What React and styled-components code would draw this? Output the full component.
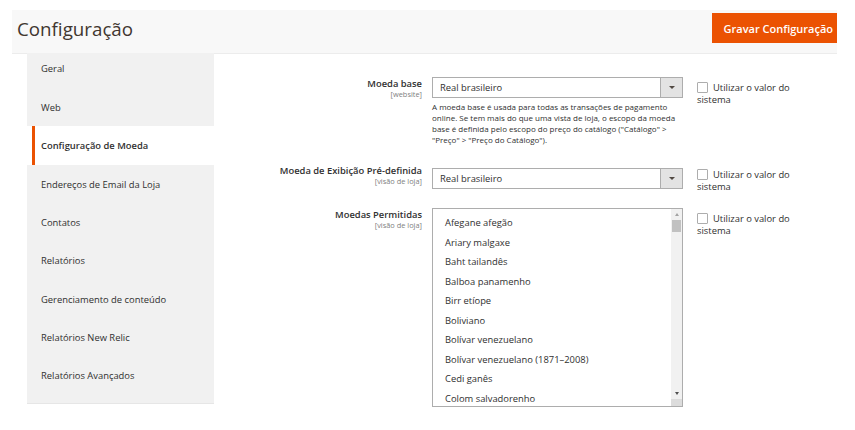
import React from "react";
import styled, { createGlobalStyle } from "styled-components";

const GlobalStyle = createGlobalStyle`
  html, body {
    margin: 0;
    padding: 0;
    background: #ffffff;
  }
  body {
    font-family: "Open Sans", "Liberation Sans", sans-serif;
    color: #303030;
  }
  * {
    box-sizing: border-box;
  }
`;

const navItems = [
  "Geral",
  "Web",
  "Configuração de Moeda",
  "Endereços de Email da Loja",
  "Contatos",
  "Relatórios",
  "Gerenciamento de conteúdo",
  "Relatórios New Relic",
  "Relatórios Avançados",
];

const currencies = [
  "Afegane afegão",
  "Ariary malgaxe",
  "Baht tailandês",
  "Balboa panamenho",
  "Birr etíope",
  "Boliviano",
  "Bolívar venezuelano",
  "Bolívar venezuelano (1871–2008)",
  "Cedi ganês",
  "Colom salvadorenho",
];

const App = () => {
  return (
    <Page>
      <GlobalStyle />
      <Header>
        <Title>Configuração</Title>
        <SaveButton>Gravar Configuração</SaveButton>
      </Header>
      <Body>
        <Nav>
          {navItems.map((item, i) => (
            <NavItem key={item} $active={i === 2}>
              {item}
            </NavItem>
          ))}
        </Nav>
        <Main>
          <Row $spacing={19}>
            <FieldLabel>
              <LabelText>Moeda base</LabelText>
              <Scope>[website]</Scope>
            </FieldLabel>
            <Control>
              <Select>
                <SelectValue>Real brasileiro</SelectValue>
                <SelectArrow>
                  <Caret />
                </SelectArrow>
              </Select>
              <Note>
                A moeda base é usada para todas as transações de pagamento
                <br />
                online. Se tem mais do que uma vista de loja, o escopo da moeda
                <br />
                base é definida pelo escopo do preço do catálogo ("Catálogo" &gt;
                <br />
                "Preço" &gt; "Preço do Catálogo").
              </Note>
            </Control>
            <UseDefault>
              <Checkbox />
              Utilizar o valor do sistema
            </UseDefault>
          </Row>

          <Row $spacing={15}>
            <FieldLabel>
              <LabelText>Moeda de Exibição Pré-definida</LabelText>
              <Scope>[visão de loja]</Scope>
            </FieldLabel>
            <Control $offset={4}>
              <Select>
                <SelectValue>Real brasileiro</SelectValue>
                <SelectArrow>
                  <Caret />
                </SelectArrow>
              </Select>
            </Control>
            <UseDefault>
              <Checkbox />
              Utilizar o valor do sistema
            </UseDefault>
          </Row>

          <Row>
            <FieldLabel>
              <LabelText>Moedas Permitidas</LabelText>
              <Scope>[visão de loja]</Scope>
            </FieldLabel>
            <Control>
              <MultiSelect>
                <OptionList>
                  {currencies.map((c) => (
                    <Option key={c}>{c}</Option>
                  ))}
                </OptionList>
                <Scrollbar>
                  <ScrollButton>
                    <ScrollCaret $up />
                  </ScrollButton>
                  <Thumb />
                  <Track />
                  <ScrollButton>
                    <ScrollCaret />
                  </ScrollButton>
                  <Resizer />
                </Scrollbar>
              </MultiSelect>
            </Control>
            <UseDefault>
              <Checkbox />
              Utilizar o valor do sistema
            </UseDefault>
          </Row>
        </Main>
      </Body>
    </Page>
  );
};

const Page = styled.div`
  width: 837px;
  padding: 10px 0 0 12px;
`;

const Header = styled.header`
  height: 43px;
  display: flex;
  justify-content: space-between;
  align-items: flex-start;
  padding-left: 5px;
  background: #f8f8f8;
  box-shadow: 0 1px 0 #ececec;
`;

const Title = styled.h1`
  margin: 6px 0 0;
  font-size: 18.75px;
  font-weight: 400;
  line-height: 25.5px;
  color: #41362f;
`;

const SaveButton = styled.button`
  margin-top: 3px;
  height: 30px;
  padding: 0 4px 0 12px;
  border: none;
  background: #eb5202;
  color: #ffffff;
  font-family: inherit;
  font-size: 11px;
  font-weight: 600;
  text-align: left;
  cursor: pointer;
`;

const Body = styled.div`
  display: flex;
  align-items: flex-start;
`;

const Nav = styled.nav`
  margin-left: 15px;
  width: 187px;
  padding-bottom: 8px;
  background: #f1f1f1;
  border-bottom: 1px solid #e6e6e6;
`;

const NavItem = styled.div`
  position: relative;
  height: 38.35px;
  display: flex;
  align-items: center;
  padding-left: 14px;
  font-size: 9.4px;
  font-weight: ${(p) => (p.$active ? 600 : 400)};
  color: #303030;
  background: ${(p) => (p.$active ? "#ffffff" : "transparent")};

  &:first-child {
    height: 35.15px;
    padding-bottom: 3.2px;
  }

  &::before {
    content: "";
    display: ${(p) => (p.$active ? "block" : "none")};
    position: absolute;
    left: 5px;
    top: 0;
    bottom: 0;
    width: 3px;
    background: #eb5202;
  }
`;

const Main = styled.main`
  flex: 1;
  padding-top: 24px;
  display: flex;
  flex-direction: column;
`;

const Row = styled.div`
  display: grid;
  grid-template-columns: 208px 251px 120px;
  column-gap: 10px;
  align-items: start;
  margin-bottom: ${(p) => p.$spacing || 0}px;
`;

const FieldLabel = styled.div`
  padding-top: 1px;
  text-align: right;
`;

const LabelText = styled.span`
  display: block;
  font-size: 9.4px;
  font-weight: 600;
  line-height: 12px;
  color: #303030;
`;

const Scope = styled.span`
  display: block;
  font-size: 7.4px;
  line-height: 9px;
  color: #808080;
`;

const Control = styled.div`
  margin-top: ${(p) => p.$offset || 0}px;
`;

const Select = styled.div`
  height: 21px;
  display: flex;
  border: 1px solid #adadad;
  background: #ffffff;
`;

const SelectValue = styled.span`
  flex: 1;
  padding-left: 7px;
  font-size: 9.4px;
  line-height: 19px;
  color: #303030;
`;

const SelectArrow = styled.span`
  width: 22px;
  display: flex;
  align-items: center;
  justify-content: center;
  background: #e3e3e3;
  border-left: 1px solid #adadad;
`;

const Caret = styled.span`
  width: 0;
  height: 0;
  border-left: 3px solid transparent;
  border-right: 3px solid transparent;
  border-top: 3.5px solid #514943;
`;

const Note = styled.p`
  margin: 3px 0 0;
  font-size: 8px;
  line-height: 11px;
  color: #303030;
`;

const UseDefault = styled.label`
  margin-left: 4px;
  padding-top: 5px;
  font-size: 9.4px;
  line-height: 12px;
  color: #303030;
`;

const Checkbox = styled.span`
  display: inline-block;
  width: 11px;
  height: 11px;
  margin-right: 5px;
  vertical-align: -2px;
  border: 1px solid #adadad;
  border-radius: 1px;
  background: #ffffff;
`;

const MultiSelect = styled.div`
  height: 199px;
  display: flex;
  border: 1px solid #adadad;
  background: #ffffff;
  overflow: hidden;
`;

const OptionList = styled.ul`
  flex: 1;
  margin: 0;
  padding: 4px 0 0 12px;
  list-style: none;
  overflow: hidden;
`;

const Option = styled.li`
  height: 19.5px;
  line-height: 19.5px;
  font-size: 9.4px;
  color: #303030;
  white-space: nowrap;
`;

const Scrollbar = styled.div`
  width: 11px;
  display: flex;
  flex-direction: column;
  background: #f1f1f1;
`;

const ScrollButton = styled.div`
  height: 11px;
  display: flex;
  align-items: center;
  justify-content: center;
`;

const ScrollCaret = styled.span`
  width: 0;
  height: 0;
  border-left: 2.5px solid transparent;
  border-right: 2.5px solid transparent;
  ${(p) =>
    p.$up ? "border-bottom: 3px solid #a3a3a3;" : "border-top: 3px solid #505050;"}
`;

const Thumb = styled.div`
  height: 12px;
  margin: 0 1px;
  background: #c1c1c1;
`;

const Track = styled.div`
  flex: 1;
`;

const Resizer = styled.div`
  height: 7px;
  background: #dcdcdc;
`;

export default App;
